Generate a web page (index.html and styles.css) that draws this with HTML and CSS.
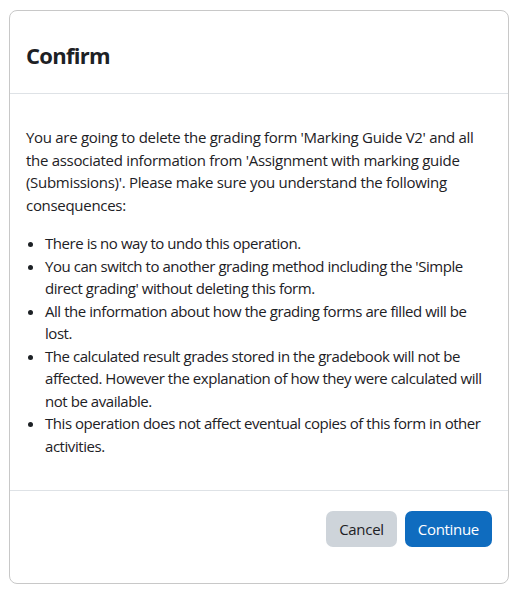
FILE: index.html
```html
<!DOCTYPE html>
<html lang="en">
<head>
    <meta charset="UTF-8">
    <meta name="viewport" content="width=device-width, initial-scale=1.0">
    <title>Confirm</title>
    <link rel="stylesheet" href="styles.css">
</head>
<body>
    <div class="modal">
        <div class="modal-header">
            <h5 class="modal-title">Confirm</h5>
        </div>

        <div class="modal-body">
            <p>You are going to delete the grading form 'Marking Guide V2' and all the associated information from 'Assignment with marking guide (Submissions)'. Please make sure you understand the following consequences:</p>
            <ul>
                <li>There is no way to undo this operation.</li>
                <li>You can switch to another grading method including the 'Simple direct grading' without deleting this form.</li>
                <li>All the information about how the grading forms are filled will be lost.</li>
                <li>The calculated result grades stored in the gradebook will not be affected. However the explanation of how they were calculated will not be available.</li>
                <li>This operation does not affect eventual copies of this form in other activities.</li>
            </ul>
        </div>

        <div class="modal-footer">
            <button class="btn btn-secondary">Cancel</button>
            <button class="btn btn-primary">Continue</button>
        </div>
    </div>
</body>
</html>
```
FILE: styles.css
```css
body {
    font-family: "Open Sans", sans-serif;
    font-size: 15px;
    line-height: 1.5;
    letter-spacing: -0.3px;
    color: #1d2125;
    background-color: white;
    margin: 0;
    padding: 10px 21px 0 9px;
}
.modal {
    width: 500px;
    height: 574px;
    box-sizing: border-box;
    display: flex;
    flex-direction: column;
    border: 1px solid #c8c8c8;
    border-radius: 8px;
}
.modal-header {
    padding: 31px 16px 24px;
    border-bottom: 1px solid #dee2e6;
}
.modal-title {
    margin: 0;
    font-size: 22px;
    font-weight: bold;
    line-height: 27px;
    letter-spacing: -0.7px;
}
.modal-body {
    padding: 16px;
    flex: 1;
}
.modal-body p {
    margin: 16px 0;
}
.modal-body ul {
    margin: 0 0 16px;
    padding-left: 19px;
    letter-spacing: -0.45px;
}
.modal-footer {
    display: flex;
    justify-content: flex-end;
    gap: 8px;
    padding: 20px 16px 36px;
    border-top: 1px solid #dee2e6;
}
.btn {
    font-family: inherit;
    font-size: 15px;
    letter-spacing: inherit;
    line-height: 22px;
    height: 36px;
    padding: 0 13px;
    border: none;
    border-radius: 7px;
    cursor: pointer;
}
.btn-secondary {
    background-color: #ced4da;
    color: #1d2125;
}
.btn-primary {
    background-color: #0f6cbf;
    color: white;
}
```
